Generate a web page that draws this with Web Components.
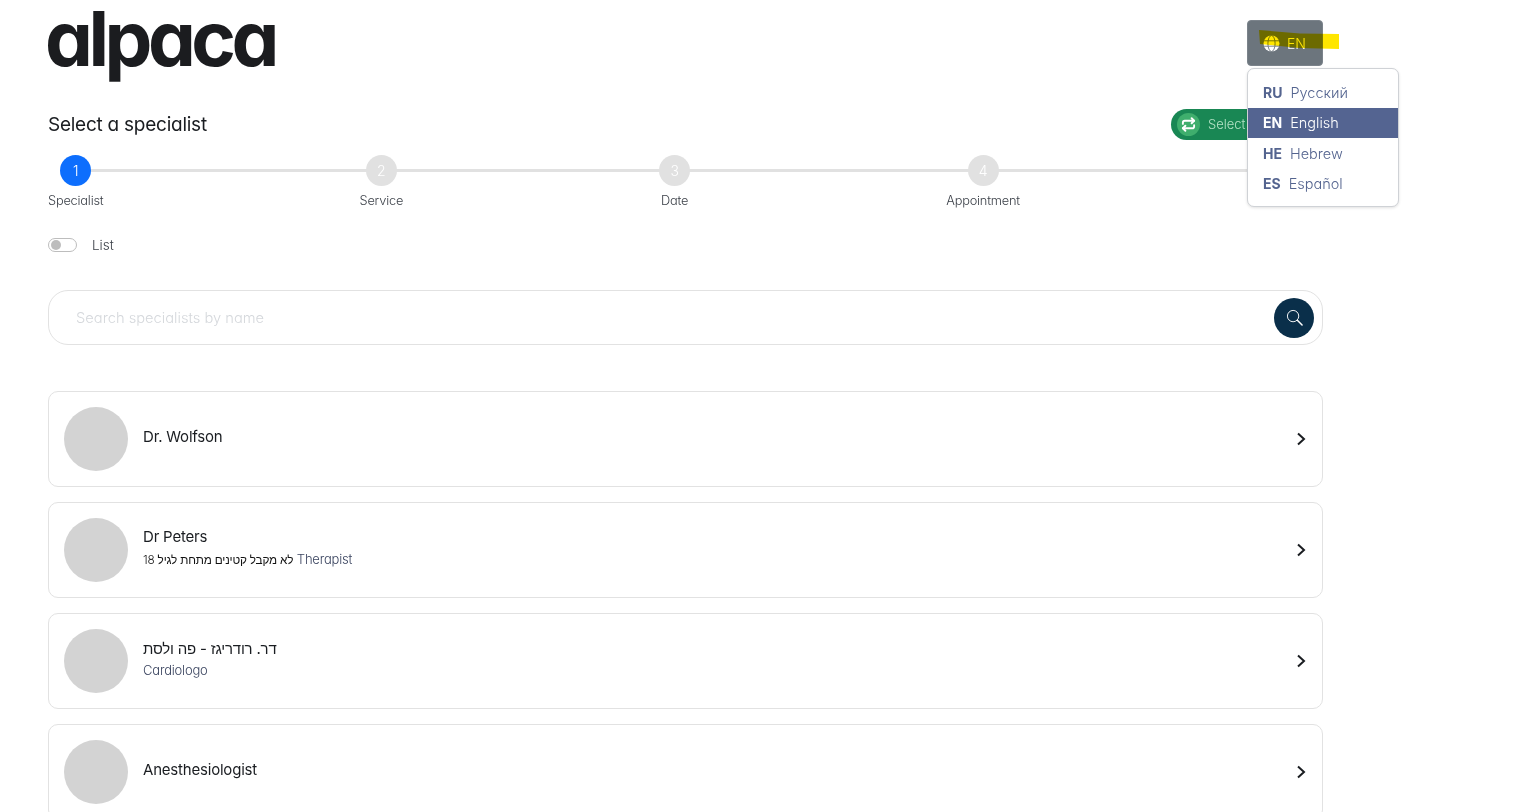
<!DOCTYPE html>
<html lang="en"><head><meta charset="utf-8"><title>alpaca</title>
<style>
html,body{margin:0;height:812px;overflow:hidden;background:#fff}
body{font-family:Inter,"Liberation Sans",sans-serif;font-feature-settings:"cv11";color:#1a1d21}
</style></head><body>
<x-page>
  <x-header></x-header>
  <x-title-row title="Select a specialist"></x-title-row>
  <x-stepper>
    <x-step n="1" label="Specialist" active></x-step>
    <x-step n="2" label="Service"></x-step>
    <x-step n="3" label="Date"></x-step>
    <x-step n="4" label="Appointment"></x-step>
    <x-step style="width:47px"></x-step>
  </x-stepper>
  <x-toggle>List</x-toggle>
  <x-search placeholder="Search specialists by name"></x-search>
  <x-list>
    <x-card name="Dr. Wolfson"></x-card>
    <x-card name="Dr Peters"><span style="color:#111;font-size:11.8px">לא מקבל קטינים מתחת לגיל 18</span> Therapist</x-card>
    <x-card name="דר. רודריגז - פה ולסת">Cardiologo</x-card>
    <x-card name="Anesthesiologist"></x-card>
  </x-list>
</x-page>
<script>
function def(name,html,init){
  customElements.define(name,class extends HTMLElement{
    constructor(){super();this.attachShadow({mode:'open'}).innerHTML=html;}
    connectedCallback(){if(init)init(this,this.shadowRoot);}
  });
}
def('x-page',`<style>:host{display:block;padding:0 214px 0 48px;position:relative}</style><slot></slot>`);
def('x-header',`<style>
:host{display:flex;justify-content:space-between;align-items:flex-start;height:99px;position:relative}
.logo{font:700 76px/76px Inter,"Liberation Sans",sans-serif;font-feature-settings:"cv11";letter-spacing:-4.5px;color:#1b1c1f;margin:0 0 0 -3px;display:block}
.lang{position:relative;margin-top:20px;width:76px;height:46px;box-sizing:border-box;background:#6c757d;border:1px solid #7b838b;border-radius:4px;color:#fff;display:flex;align-items:center;gap:7px;padding:0 0 0 15px;font:300 14px Inter,sans-serif;font-feature-settings:"cv11"}
.menu{position:absolute;z-index:5;left:-1px;top:47px;width:152px;height:139px;box-sizing:border-box;padding:8px 0;background:#fff;border:1px solid #cfd2d6;border-radius:7px;box-shadow:0 1px 3px rgba(0,0,0,.12);font:300 14.500px Inter,sans-serif;font-feature-settings:"cv11";color:#54648f}
.item{display:flex;align-items:center;height:30.500px;padding-left:15px;gap:8px}
.item b{font-weight:700;font-size:14px}
.item.on{background:#546491;color:#fff}
.mark{position:absolute;z-index:6;left:11px;top:9px;mix-blend-mode:multiply;pointer-events:none}
</style>
<div class="logo">alpaca</div>
<div class="lang">
  <svg width="17" height="17" viewBox="0 0 17 17"><circle cx="8.500" cy="8.500" r="8" fill="#fff"/><g fill="none" stroke="#6c757d" stroke-width=".9"><ellipse cx="8.500" cy="8.500" rx="3.600" ry="8"/><path d="M1 5.800h15M1 11.200h15"/></g></svg>
  <span>EN</span>
  <svg class="mark" width="82" height="22" viewBox="0 0 82 22"><path d="M0 0L41 3.500L80 4V19L40 18L1 14Z" fill="#ffe600"/></svg>
  <div class="menu">
    <div class="item"><b>RU</b><span>Русский</span></div>
    <div class="item on"><b>EN</b><span>English</span></div>
    <div class="item"><b>HE</b><span>Hebrew</span></div>
    <div class="item"><b>ES</b><span>Español</span></div>
  </div>
</div>`);
def('x-title-row',`<style>
:host{display:flex;justify-content:space-between;align-items:center;height:50px}
h1{margin:0;font:400 19px Inter,sans-serif;font-feature-settings:"cv11";letter-spacing:-.25px;color:#1a1d21}
.btn{display:flex;align-items:center;gap:8px;box-sizing:border-box;width:152px;height:31px;padding-left:6px;border-radius:16px;background:#198754;color:#b4e2c5;font:300 13px Inter,sans-serif;font-feature-settings:"cv11"}
.ic{width:23px;height:23px;border-radius:50%;background:#3fae6d;display:flex;align-items:center;justify-content:center}
</style><h1></h1><div class="btn"><span class="ic"><svg width="15" height="15" viewBox="0 0 24 24" fill="none" stroke="#fff" stroke-width="3" stroke-linecap="round" stroke-linejoin="round"><path d="M17 2l4 4-4 4"/><path d="M3 11V9a3 3 0 0 1 3-3h15"/><path d="M7 22l-4-4 4-4"/><path d="M21 13v2a3 3 0 0 1-3 3H3"/></svg></span><span>Select</span></div>`,
(h,s)=>{s.querySelector('h1').textContent=h.getAttribute('title');h.removeAttribute('title')});
def('x-stepper',`<style>
:host{display:flex;justify-content:space-between;position:relative;height:65px}
.track{position:absolute;left:20px;right:0;top:20px;height:3px;background:#e1e1e1}
::slotted(*){position:relative}
</style><div class="track"></div><slot></slot>`);
def('x-step',`<style>
:host{display:flex;flex-direction:column;align-items:center;font:300 12.800px Inter,sans-serif;font-feature-settings:"cv11";color:#3c4149;letter-spacing:-.2px}
.c{width:31px;height:31px;border-radius:50%;background:#e1e1e1;color:#fff;display:flex;align-items:center;justify-content:center;font-size:14px;margin-top:6px}
:host([active]) .c{background:#0d6efd}
.l{margin-top:7px;white-space:nowrap;line-height:16px}
:host(:not([n])) .c{visibility:hidden}
</style><div class="c"></div><div class="l"></div>`,
(h,s)=>{s.querySelector('.c').textContent=h.getAttribute('n')||'';s.querySelector('.l').textContent=h.getAttribute('label')||''});
def('x-toggle',`<style>
:host{display:flex;align-items:center;gap:15px;height:16px;margin-top:23px;font:300 13.500px Inter,sans-serif;font-feature-settings:"cv11";color:#3c4149}
.t{width:29px;height:14px;box-sizing:border-box;border:1px solid #bdbdbd;border-radius:8px;display:flex;align-items:center;padding-left:2px}
.t i{width:10px;height:10px;border-radius:50%;background:#bdbdbd}
</style><span class="t"><i></i></span><slot></slot>`);
def('x-search',`<style>
:host{display:flex;align-items:center;justify-content:space-between;box-sizing:border-box;height:55px;margin-top:37px;border:1px solid #e2e2e2;border-radius:20px;padding:0 8px 0 27px;font:300 14.700px Inter,sans-serif;font-feature-settings:"cv11";color:#d5d8dc}
.b{width:40px;height:40px;border-radius:50%;background:#0a2f4a;display:flex;align-items:center;justify-content:center}
</style><span class="p"></span><span class="b"><svg width="17" height="17" viewBox="0 0 18 18" fill="none" stroke="#fff" stroke-width="1"><circle cx="7.500" cy="7.500" r="6"/><path d="M12 12l5 5" stroke-width="1.600" stroke-linecap="round"/></svg></span>`,
(h,s)=>{s.querySelector('.p').textContent=h.getAttribute('placeholder')});
def('x-list',`<style>:host{display:flex;flex-direction:column;gap:15px;margin-top:46px}</style><slot></slot>`);
def('x-card',`<style>
:host{display:flex;align-items:center;box-sizing:border-box;height:96px;flex:none;border:1px solid #e2e2e2;border-radius:10px;padding:0 15px;gap:15px}
.a{width:64px;height:64px;border-radius:50%;background:#d3d3d3;flex:none}
.m{flex:1;min-width:0;display:flex;flex-direction:column;gap:3.500px;padding-bottom:4px}
.n{font:400 15px/20px Inter,"Liberation Sans",sans-serif;font-feature-settings:"cv11";letter-spacing:-.2px;color:#1a1d21}
.d{font:300 13px/17px Inter,"Liberation Sans",sans-serif;font-feature-settings:"cv11";letter-spacing:-.2px;color:#3b4560}
.d.none{display:none}
svg{flex:none;margin-right:1px}
</style><span class="a"></span><div class="m"><div class="n"></div><div class="d"><slot></slot></div></div><svg width="10" height="14" viewBox="0 0 10 14" fill="none" stroke="#1a1d21" stroke-width="2"><path d="M2 1.500L8 7l-6 5.500"/></svg>`,
(h,s)=>{s.querySelector('.n').textContent=h.getAttribute('name');if(!h.textContent.trim())s.querySelector('.d').classList.add('none')});
</script>
</body></html>
